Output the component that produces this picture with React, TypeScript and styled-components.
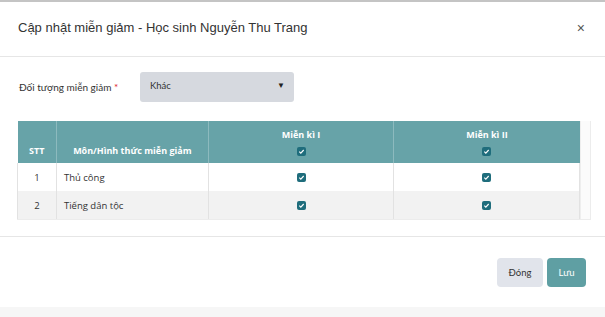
import styled, { createGlobalStyle } from "styled-components";

const GlobalStyle = createGlobalStyle`
  html, body {
    margin: 0;
    padding: 0;
    background: #ffffff;
  }
  body {
    width: 605px;
    height: 317px;
    overflow: hidden;
  }
`;

const rows = [
  { stt: 1, name: "Thủ công", k1: true, k2: true },
  { stt: 2, name: "Tiếng dân tộc", k1: true, k2: true },
];

const Modal = styled.div`
  width: 605px;
  height: 307px;
  border-top: 2px solid #c4c4c4;
  background: #fff;
  display: flex;
  flex-direction: column;
  box-sizing: border-box;
`;

const Backdrop = styled.div`
  height: 10px;
  background: #f6f6f6;
`;

const Header = styled.div`
  height: 55px;
  display: flex;
  align-items: center;
  justify-content: space-between;
  padding: 0 20px 0 18px;
  border-bottom: 1px solid #e6e6e6;
  box-sizing: border-box;
`;

const Title = styled.h4`
  margin: 0;
  padding-bottom: 3px;
  font-family: "Liberation Sans", Arial, sans-serif;
  font-weight: 400;
  font-size: 13px;
  color: #333;
`;

const Close = styled.button`
  border: none;
  background: none;
  padding: 0 0 2px;
  font-family: "Liberation Sans", Arial, sans-serif;
  font-size: 14px;
  font-weight: 400;
  color: #555;
  line-height: 1;
  cursor: pointer;
`;

const Body = styled.div`
  padding: 15px 14px 0 17px;
  height: 180px;
  border-bottom: 1px solid #e6e6e6;
  box-sizing: border-box;
`;

const FormRow = styled.div`
  display: flex;
  align-items: center;
  height: 30px;
`;

const Label = styled.label`
  width: 121px;
  padding-left: 2px;
  font-family: Lato, "Open Sans", sans-serif;
  font-size: 10px;
  color: #333;
`;

const Required = styled.span`
  color: #e0242b;
`;

const Select = styled.div`
  width: 154px;
  height: 30px;
  background: #d6d9df;
  border-radius: 3px;
  display: flex;
  align-items: center;
  justify-content: space-between;
  padding: 0 9px 4px 10px;
  box-sizing: border-box;
  font-family: Lato, "Open Sans", sans-serif;
  font-size: 9.5px;
  color: #333;
`;

const Caret = styled.span`
  font-size: 8px;
  color: #222;
`;

const TableWrap = styled.div`
  margin-top: 19px;
  width: 574px;
  display: flex;
  border-right: 1px solid #ececec;
  border-bottom: 1px solid #ececec;
  box-sizing: border-box;
`;

const Table = styled.table`
  width: 563px;
  border-collapse: collapse;
  font-family: "Open Sans", sans-serif;
  font-size: 9.5px;
  color: #333;
`;

const Gutter = styled.div`
  flex: 1;
  background: #fbfbfb;
  border-left: 1px solid #eeeeee;
`;

const Th = styled.th<{ $w: number; $top?: boolean }>`
  width: ${(p) => p.$w}px;
  height: 42px;
  background: #67a3a8;
  color: #fff;
  font-weight: 700;
  font-size: 9px;
  vertical-align: ${(p) => (p.$top ? "top" : "bottom")};
  padding: ${(p) => (p.$top ? "7px 0 0" : "0 0 6px")};
  border-right: 1px solid #8dbabe;
  box-sizing: border-box;
  &:last-child {
    border-right: none;
  }
`;

const HeadStack = styled.div`
  display: flex;
  flex-direction: column;
  align-items: center;
  gap: 6px;
`;

const Tr = styled.tr<{ $alt?: boolean }>`
  background: ${(p) => (p.$alt ? "#f2f2f2" : "#fff")};
`;

const Td = styled.td<{ $align?: string }>`
  height: 28px;
  padding: 0 0 0 ${(p) => (p.$align === "left" ? "7px" : "0")};
  text-align: ${(p) => p.$align || "center"};
  border-right: 1px solid #e2e2e2;
  border-left: 1px solid #e2e2e2;
  box-sizing: border-box;
`;

const Box = styled.span`
  display: inline-flex;
  align-items: center;
  justify-content: center;
  width: 9px;
  height: 9px;
  border-radius: 2px;
  background: #1f6d7c;
  vertical-align: middle;
`;

const Check = () => (
  <Box>
    <svg width="7" height="7" viewBox="0 0 8 8">
      <path d="M1.5 4.2 L3.2 5.8 L6.5 2.3" fill="none" stroke="#fff" strokeWidth="1.3" />
    </svg>
  </Box>
);

const Footer = styled.div`
  flex: 1;
  display: flex;
  justify-content: flex-end;
  align-items: flex-start;
  gap: 4px;
  padding: 21px 19px 0 0;
`;

const Button = styled.button<{ $primary?: boolean }>`
  height: 29px;
  width: ${(p) => (p.$primary ? "39px" : "46px")};
  padding: 0;
  border: none;
  border-radius: 4px;
  background: ${(p) => (p.$primary ? "#5f9fa3" : "#e1e4eb")};
  color: ${(p) => (p.$primary ? "#fff" : "#333")};
  font-family: Lato, "Open Sans", sans-serif;
  font-size: 9.5px;
  font-weight: 400;
  cursor: pointer;
`;

export default function App() {
  return (
    <>
      <GlobalStyle />
      <Modal>
        <Header>
          <Title>Cập nhật miễn giảm - Học sinh Nguyễn Thu Trang</Title>
          <Close>×</Close>
        </Header>
        <Body>
          <FormRow>
            <Label>
              Đối tượng miễn giảm <Required>*</Required>
            </Label>
            <Select>
              <span>Khác</span>
              <Caret>▼</Caret>
            </Select>
          </FormRow>
          <TableWrap>
            <Table>
              <thead>
                <tr>
                  <Th $w={39}>STT</Th>
                  <Th $w={152}>Môn/Hình thức miễn giảm</Th>
                  <Th $w={186} $top>
                    <HeadStack>
                      <span>Miễn kì I</span>
                      <Check />
                    </HeadStack>
                  </Th>
                  <Th $w={186} $top>
                    <HeadStack>
                      <span>Miễn kì II</span>
                      <Check />
                    </HeadStack>
                  </Th>
                </tr>
              </thead>
              <tbody>
                {rows.map((r, i) => (
                  <Tr key={r.stt} $alt={i % 2 === 1}>
                    <Td>{r.stt}</Td>
                    <Td $align="left">{r.name}</Td>
                    <Td>{r.k1 && <Check />}</Td>
                    <Td>{r.k2 && <Check />}</Td>
                  </Tr>
                ))}
              </tbody>
            </Table>
            <Gutter />
          </TableWrap>
        </Body>
        <Footer>
          <Button>Đóng</Button>
          <Button $primary>Lưu</Button>
        </Footer>
      </Modal>
      <Backdrop />
    </>
  );
}
